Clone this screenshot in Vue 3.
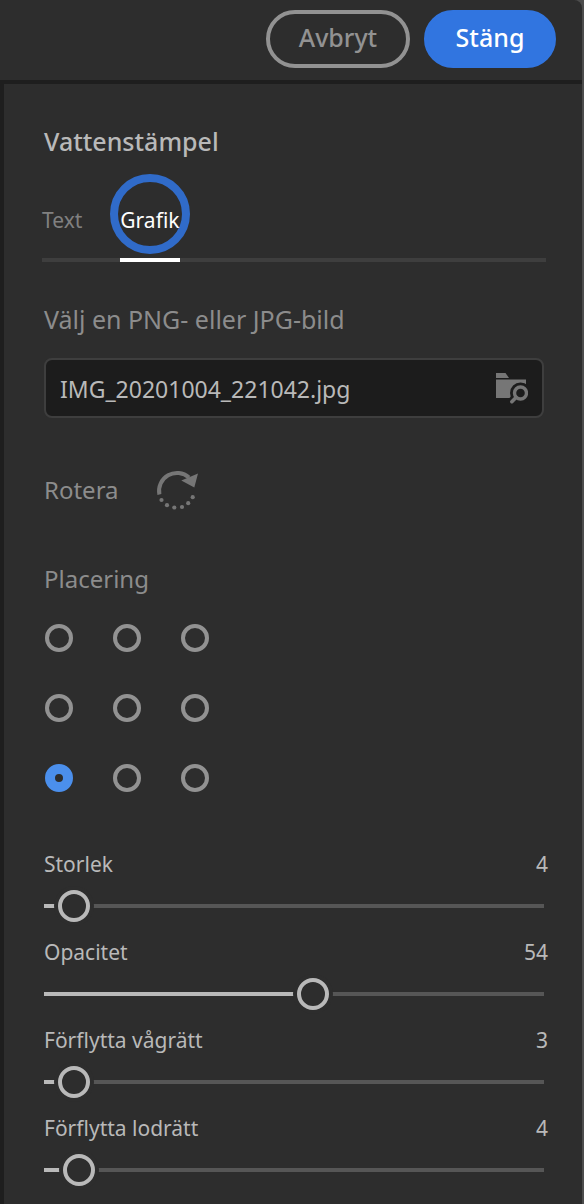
<script setup>
import { reactive, ref } from 'vue'

const tab = ref('grafik')
const fileName = ref('IMG_20201004_221042.jpg')
const placement = ref(7)
const sliders = reactive([
  { id: 'size', label: 'Storlek', value: 4, min: 1 },
  { id: 'opacity', label: 'Opacitet', value: 54, min: 0 },
  { id: 'offset-x', label: 'Förflytta vågrätt', value: 3, min: 0 },
  { id: 'offset-y', label: 'Förflytta lodrätt', value: 4, min: 0 },
])
const percent = (s) => ((s.value - s.min) / (100 - s.min)) * 100 + '%'
</script>

<template>
  <div class="window">
    <header class="bar">
      <button type="button" class="btn outline">Avbryt</button>
      <button type="button" class="btn primary">Stäng</button>
    </header>
    <main class="panel">
      <h1>Vattenstämpel</h1>
      <div class="tabs" role="tablist">
        <button type="button" role="tab" :aria-selected="tab === 'text'" :class="{ active: tab === 'text' }" @click="tab = 'text'">Text</button>
        <button type="button" role="tab" :aria-selected="tab === 'grafik'" :class="{ active: tab === 'grafik' }" @click="tab = 'grafik'">Grafik</button>
      </div>

      <label class="caption" for="file">Välj en PNG- eller JPG-bild</label>
      <div class="file">
        <input id="file" v-model="fileName" type="text" />
        <button type="button" aria-label="Bläddra">
          <svg width="34" height="32" viewBox="0 0 34 32">
            <path d="M2 0H11.500L15 5H2Z" fill="#767676" />
            <path d="M2 6.500H32V25H2Z" fill="#767676" />
            <circle cx="26.500" cy="20" r="10.500" fill="#1c1c1c" />
            <path d="M22 24L17.500 28.500" stroke="#1c1c1c" stroke-width="8" />
            <circle cx="26.500" cy="20" r="6" fill="none" stroke="#767676" stroke-width="3.400" />
            <path d="M22 24.500L17.800 28.700" stroke="#767676" stroke-width="3.600" stroke-linecap="round" />
          </svg>
        </button>
      </div>

      <div class="rotate">
        <span id="rotate-label">Rotera</span>
        <button type="button" aria-labelledby="rotate-label">
          <svg width="44" height="44" viewBox="0 0 44 44">
            <path d="M4.400 26.500A18 18 0 0 1 34 9.500" fill="none" stroke="#767676" stroke-width="4" />
            <path d="M43 5.500L39.300 19.500L26.300 12.500L33.500 9.500Z" fill="#767676" />
            <g fill="#767676">
              <circle cx="6.500" cy="32" r="2.100" />
              <circle cx="12" cy="37.200" r="2.100" />
              <circle cx="19.300" cy="39.500" r="2.100" />
              <circle cx="27" cy="39" r="2.100" />
              <circle cx="33.200" cy="35.200" r="2.100" />
              <circle cx="37.700" cy="29.200" r="2.100" />
            </g>
          </svg>
        </button>
      </div>

      <fieldset>
        <legend>Placering</legend>
        <div class="grid">
          <input v-for="n in 9" :key="n" v-model="placement" type="radio" name="placement" :value="n" :aria-label="'Placering ' + n" />
        </div>
      </fieldset>

      <div v-for="s in sliders" :key="s.id" class="slider">
        <div class="row">
          <label :for="s.id">{{ s.label }}</label>
          <output :for="s.id">{{ s.value }}</output>
        </div>
        <input :id="s.id" v-model.number="s.value" type="range" :min="s.min" max="100" :style="{ '--fill': percent(s) }" />
      </div>
    </main>
  </div>
</template>

<style>
body {
  background: #4c4c4c;
}
</style>

<style scoped>
.window {
  box-sizing: border-box;
  min-height: 100vh;
  margin-right: 2px;
  background: #2d2d2d;
  border-top-right-radius: 8px;
  font-family: "Noto Sans", "Open Sans", sans-serif;
  color: #b9b9b9;
  display: flex;
  flex-direction: column;
}
button {
  font: inherit;
  color: inherit;
  background: none;
  border: 0;
  padding: 0;
  cursor: pointer;
}
.bar {
  display: flex;
  justify-content: flex-end;
  gap: 14px;
  padding: 10px 26px 12px;
  border-bottom: 4px solid #1e1e1e;
}
.btn {
  box-sizing: border-box;
  height: 58px;
  padding: 0 20px 4px;
  border: 4px solid #929292;
  border-radius: 29px;
  font-size: 25px;
  font-weight: 500;
  color: #929292;
}
.btn.outline {
  min-width: 144px;
}
.btn.primary {
  min-width: 132px;
  background: #3175e0;
  border-color: #3175e0;
  color: #fff;
}
.panel {
  flex: 1;
  padding: 40px 38px 16px 40px;
  border-left: 4px solid #1e1e1e;
}
h1 {
  margin: 0;
  font-size: 25px;
  line-height: 34px;
  font-weight: 500;
}
.tabs {
  display: flex;
  gap: 38px;
  height: 80px;
  margin: 20px -2px 0;
  border-bottom: 4px solid #3e3e3e;
}
.tabs button {
  position: relative;
  z-index: 0;
  height: 84px;
  padding-top: 4px;
  box-sizing: border-box;
  border-bottom: 4px solid transparent;
  font-size: 21px;
  color: #808080;
}
.tabs button.active {
  color: #fff;
  border-color: #fff;
}
.tabs button.active::before {
  content: "";
  position: absolute;
  z-index: -1;
  box-sizing: border-box;
  width: 80px;
  height: 80px;
  left: calc(50% - 40px);
  bottom: 4px;
  border: 8px solid #306bc9;
  border-radius: 50%;
}
.caption,
.rotate,
legend {
  font-size: 24px;
  line-height: 34px;
  color: #8c8c8c;
}
.caption {
  display: block;
  margin-top: 40px;
  font-size: 25px;
}
.file {
  display: flex;
  align-items: center;
  box-sizing: border-box;
  height: 60px;
  margin-top: 22px;
  padding: 2px 14px 0;
  background: #1c1c1c;
  border: 2px solid #3e3e3e;
  border-radius: 8px;
}
.file input {
  flex: 1;
  min-width: 0;
  padding: 0;
  border: 0;
  outline: 0;
  background: none;
  font: inherit;
  font-size: 23px;
  color: inherit;
}
svg {
  display: block;
}
.rotate {
  display: flex;
  align-items: center;
  gap: 36px;
  margin-top: 50px;
}
fieldset {
  margin: 50px 0 0;
  padding: 0;
  border: 0;
  min-width: 0;
}
legend {
  padding: 0;
}
.grid {
  display: grid;
  grid-template-columns: repeat(3, 28px);
  gap: 42px 40px;
  padding: 28px 0 0 1px;
}
.grid input {
  appearance: none;
  box-sizing: border-box;
  width: 28px;
  height: 28px;
  margin: 0;
  border: 4px solid #929292;
  border-radius: 50%;
}
.grid input:checked {
  border: 10px solid #4b8fec;
}
.slider {
  height: 88px;
}
fieldset + .slider {
  margin-top: 56px;
}
.row {
  display: flex;
  justify-content: space-between;
  margin-right: -4px;
  font-size: 21px;
  line-height: 32px;
}
.slider input {
  appearance: none;
  display: block;
  width: 100%;
  height: 32px;
  margin: 10px 0 0;
  background: none;
}
.slider input::-webkit-slider-runnable-track {
  height: 4px;
  background: linear-gradient(to right, #b9b9b9 var(--fill), #565656 var(--fill));
}
.slider input::-webkit-slider-thumb {
  appearance: none;
  box-sizing: border-box;
  width: 32px;
  height: 32px;
  margin-top: -14px;
  border: 4px solid #b9b9b9;
  border-radius: 50%;
  background: #2d2d2d;
  box-shadow: 0 0 0 4px #2d2d2d;
}
</style>
